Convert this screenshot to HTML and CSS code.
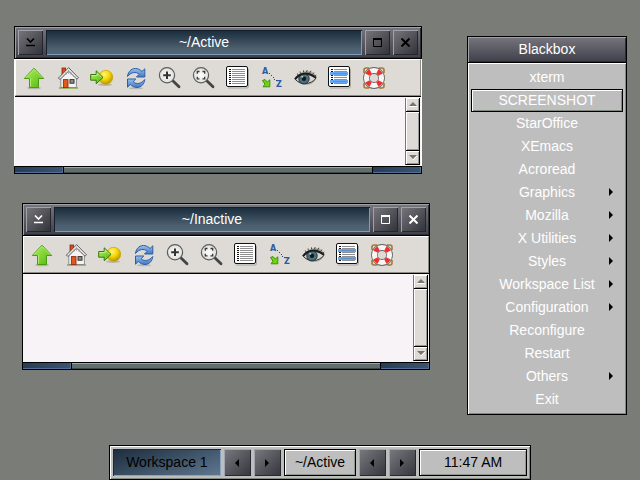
FILE: index.html
```html
<!DOCTYPE html>
<html lang="en">
<head>
<meta charset="utf-8">
<title>Blackbox</title>
<link rel="stylesheet" href="styles.css">
</head>
<body>
<svg class="sprite" aria-hidden="true">
  <defs>
    <linearGradient id="green" x1="0" y1="0" x2="1" y2="1"><stop offset="0" stop-color="#b5f060"/><stop offset="1" stop-color="#4fb80c"/></linearGradient>
    <linearGradient id="blue" x1="0" y1="0" x2="0" y2="1"><stop offset="0" stop-color="#9cc0ec"/><stop offset="1" stop-color="#3d78c4"/></linearGradient>
    <radialGradient id="gold" cx="0.4" cy="0.3" r="0.7"><stop offset="0" stop-color="#fff27a"/><stop offset="0.5" stop-color="#f8d808"/><stop offset="1" stop-color="#b89400"/></radialGradient>
    <radialGradient id="lens"><stop offset="0" stop-color="#ffffff"/><stop offset="1" stop-color="#dededb"/></radialGradient>
    <symbol id="up" viewBox="0 0 24 24">
      <ellipse cx="12" cy="22" rx="7" ry="1.3" fill="#b5b3aa"/>
      <path d="M12 2.2 21.7 12.5H16.5V21.5H7.5V12.5H2.3Z" fill="url(#green)" stroke="#4a9a14" stroke-linejoin="round"/>
      <path d="M3.8 11.8 12 3.4 20.2 11.8M8.5 12V20.5" fill="none" stroke="#baf27c" opacity=".8"/>
    </symbol>
    <symbol id="home" viewBox="0 0 24 24">
      <path d="M3 22H22" stroke="#8aa83a" stroke-width="1.4"/>
      <rect x="6" y="2" width="3.6" height="7" fill="#d9481e" stroke="#8b2b12" stroke-width=".8"/>
      <path d="M4.8 11 12.6 4 20.4 11V21.5H4.8Z" fill="#f4f4f2" stroke="#777" stroke-width=".8"/>
      <path d="M12.6 1.6 2.3 12.2 4 13.4 12.6 5.2 21 13.2 22.5 11.8Z" fill="#e6e6e6" stroke="#444" stroke-width=".8"/>
      <path d="M10 6V9M12.5 4V8M15 6V9M17.5 9V11M7.5 9V11" stroke="#999" stroke-width=".7"/>
      <rect x="7.4" y="13.6" width="4.6" height="8" fill="#e05a20" stroke="#982b0a" stroke-width=".9"/>
      <rect x="14" y="13.6" width="4" height="3.6" fill="#8d918d" stroke="#333"/>
    </symbol>
    <symbol id="jump" viewBox="0 0 24 24">
      <ellipse cx="15" cy="18.7" rx="7" ry="1.3" fill="#b7b4a6"/>
      <circle cx="15.7" cy="11.3" r="7" fill="url(#gold)" stroke="#c8a404" stroke-width=".7"/>
      <path d="M.7 8.5H6.2V4.8L13 11.4 6.2 17.8V14.2H.7Z" fill="url(#green)" stroke="#34780a"/>
      <path d="M1.5 9.5H7.2V7L11.5 11.2" fill="none" stroke="#d0f8a0" opacity=".8"/>
    </symbol>
    <symbol id="reload" viewBox="0 0 24 24">
      <ellipse cx="12" cy="22.2" rx="7" ry="1.1" fill="#b9b7b2"/>
      <path d="M3.5 10.5C4 5 8.5 1.6 13 2.7 15 3.1 16.8 4.2 18 5.5L20.8 2.8V11H12.5L15.2 8.3C11.8 5.2 7 6.2 3.5 10.5Z" fill="url(#blue)" stroke="#2d5fa5" stroke-linejoin="round"/>
      <path d="M20.8 13.5C20.3 19 15.8 22.4 11.3 21.3 9.3 20.9 7.5 19.8 6.3 18.5L3.5 21.2V13H11.8L9.1 15.7C12.5 18.8 17.3 17.8 20.8 13.5Z" fill="url(#blue)" stroke="#2d5fa5" stroke-linejoin="round"/>
    </symbol>
    <symbol id="zoomin" viewBox="0 0 24 24">
      <path d="M14.5 14.5 21 20.8" stroke="#444" stroke-width="2.8" stroke-linecap="round"/>
      <circle cx="9" cy="9.2" r="7.6" fill="url(#lens)" stroke="#5c5e5a" stroke-width="1.2"/>
      <path d="M9 5.5V13M5.2 9.2H12.8" stroke="#333" stroke-width="2"/>
    </symbol>
    <symbol id="zoomfit" viewBox="0 0 24 24">
      <path d="M14.5 14.5 21 20.8" stroke="#444" stroke-width="2.8" stroke-linecap="round"/>
      <circle cx="9" cy="9.2" r="7.6" fill="url(#lens)" stroke="#5c5e5a" stroke-width="1.2"/>
      <path d="M7.5 5.5H5.3V7.7M10.5 5.5H12.7V7.7M12.7 10.7V12.9H10.5M7.5 12.9H5.3V10.7" fill="none" stroke="#3a3a3a" stroke-width="1.3"/>
    </symbol>
    <symbol id="list" viewBox="0 0 24 24">
      <path d="M22.5 3V20.5Q22.5 22 21 22H2" fill="none" stroke="#aaa8a4"/>
      <rect x=".5" y=".5" width="21" height="20" rx="1.5" fill="#fff" stroke="#111"/>
      <path d="M3 3.5H5M3 5.5H5M3 7.5H5M3 9.5H5M3 11.5H5M3 13.5H5M3 15.5H5M3 17.5H5" stroke="#111"/>
      <path d="M6 3.5H19M6 5.5H19M6 7.5H19M6 9.5H19M6 11.5H19M6 13.5H19M6 15.5H19M6 17.5H19" stroke="#8f8f8f"/>
    </symbol>
    <symbol id="sort" viewBox="0 0 24 24">
      <text x="2" y="8" class="letter">A</text>
      <text x="16" y="21" class="letter">Z</text>
      <path d="M9 7.5h1M11 9.5h1M13 11.5h1M14 13.5h1M16 14.5h1" stroke="#204a87"/>
      <path d="M2.5 14.5 5 13.5 7.3 16 9.8 13.8V20.8H3L5 18.2Z" fill="#73d216" stroke="#3f8f08"/>
    </symbol>
    <symbol id="eye" viewBox="0 0 24 24">
      <path d="M1 13.5C4 6.5 11 3.5 17 5.5 20 6.5 22 9 22.7 12 21 17 15 20 9 18.7 5 18 3 15.5 1 13.5Z" fill="#8e8a84" opacity=".6"/>
      <path d="M1.5 13.6C6 8 14 6 21.8 12.5 17 18.5 7 19.5 1.5 13.6Z" fill="#d8d6d2" stroke="#333"/>
      <circle cx="10" cy="12.7" r="5.2" fill="#4b707c" stroke="#24343a"/>
      <circle cx="10" cy="12.7" r="2.2" fill="#101a1e"/>
      <circle cx="8.3" cy="10.7" r="1" fill="#b8d0d4"/>
      <path d="M1 13.3C4.5 7.5 13.5 4.5 22 11.8" fill="none" stroke="#1c1c1c" stroke-width="2"/>
      <path d="M4 9 3.4 7.5M6.5 7.5 6 5.5M9.5 6.3V4.4M12.5 6.2 13.2 4M15.5 7.2 17 4.8M18.3 8.7 20 6.6M20.5 10.5 22.3 9" fill="none" stroke="#3c3a38" stroke-width=".9"/>
    </symbol>
    <symbol id="select" viewBox="0 0 24 24">
      <use href="#list"/>
      <path d="M2 7.5H20M2 15.5H20" stroke="#67a7f4" stroke-width="3"/>
      <path d="M5 7.5H19M5 15.5H19" stroke="#5a90d4"/>
    </symbol>
    <symbol id="help" viewBox="0 0 24 24">
      <path d="M2 7V4Q2 2 4 2H7M17 2H20Q22 2 22 4V7M22 17V20Q22 22 20 22H17M7 22H4Q2 22 2 20V17" fill="none" stroke="#a47a34" stroke-width="1.6"/>
      <circle cx="12" cy="12" r="7.5" fill="none" stroke="#666" stroke-width="6.8"/>
      <circle cx="12" cy="12" r="7.5" fill="none" stroke="#f6f6f4" stroke-width="5.2"/>
      <circle cx="12" cy="12" r="7.3" fill="none" stroke="#f03030" stroke-width="5" pathLength="80" stroke-dasharray="8 12" stroke-dashoffset="-6"/>
    </symbol>
    <symbol id="iconify" viewBox="0 0 9 9"><path d="M1 .5 4.5 4 8 .5M0 7.5H9" fill="none" stroke="currentColor" stroke-width="1.6"/></symbol>
    <symbol id="maximize" viewBox="0 0 9 9"><path d="M.5 1H8.5V8.5H.5Z" fill="none" stroke="currentColor"/><path d="M0 1H9" stroke="currentColor" stroke-width="2"/></symbol>
    <symbol id="close" viewBox="0 0 9 9"><path d="M.5.5 8.5 8.5M8.5.5.5 8.5" stroke="currentColor" stroke-width="2"/></symbol>
    <symbol id="left" viewBox="0 0 4 8"><path d="M4 0V8L0 4Z" fill="currentColor"/></symbol>
    <symbol id="right" viewBox="0 0 4 8"><path d="M0 0V8L4 4Z" fill="currentColor"/></symbol>
    <symbol id="scrollup" viewBox="0 0 8 5"><path d="M0 4 4 0 8 4Z" fill="#77756f"/><path d="M0 4.5H8" stroke="#fff"/></symbol>
    <symbol id="scrolldown" viewBox="0 0 8 5"><path d="M4 5 8 1" stroke="#fff"/><path d="M0 0 4 4 8 0Z" fill="#77756f"/></symbol>
  </defs>
</svg>

<main class="desktop">
  <section class="window window-active" aria-label="~/Active">
    <header class="titlebar">
      <button class="frame-button" aria-label="Iconify"><svg><use href="#iconify"/></svg></button>
      <h1 class="title-label">~/Active</h1>
      <button class="frame-button" aria-label="Maximize"><svg><use href="#maximize"/></svg></button>
      <button class="frame-button" aria-label="Close"><svg><use href="#close"/></svg></button>
    </header>
    <div class="client">
      <nav class="tools" aria-label="Tools">
        <button aria-label="Up"><svg><use href="#up"/></svg></button>
        <button aria-label="Home"><svg><use href="#home"/></svg></button>
        <button aria-label="Go to"><svg><use href="#jump"/></svg></button>
        <button aria-label="Reload"><svg><use href="#reload"/></svg></button>
        <button aria-label="Zoom in"><svg><use href="#zoomin"/></svg></button>
        <button aria-label="Zoom to fit"><svg><use href="#zoomfit"/></svg></button>
        <button aria-label="List"><svg><use href="#list"/></svg></button>
        <button aria-label="Sort"><svg><use href="#sort"/></svg></button>
        <button aria-label="Show hidden"><svg><use href="#eye"/></svg></button>
        <button aria-label="Select"><svg><use href="#select"/></svg></button>
        <button aria-label="Help"><svg><use href="#help"/></svg></button>
      </nav>
      <div class="view">
        <div class="scrollbar">
          <button aria-label="Scroll up"><svg><use href="#scrollup"/></svg></button>
          <div class="thumb"></div>
          <button aria-label="Scroll down"><svg><use href="#scrolldown"/></svg></button>
        </div>
      </div>
    </div>
    <footer class="handle"><i class="grip"></i><i class="bar"></i><i class="grip"></i></footer>
  </section>

  <section class="window window-inactive" aria-label="~/Inactive">
    <header class="titlebar">
      <button class="frame-button" aria-label="Iconify"><svg><use href="#iconify"/></svg></button>
      <h1 class="title-label">~/Inactive</h1>
      <button class="frame-button" aria-label="Maximize"><svg><use href="#maximize"/></svg></button>
      <button class="frame-button" aria-label="Close"><svg><use href="#close"/></svg></button>
    </header>
    <div class="client">
      <nav class="tools" aria-label="Tools">
        <button aria-label="Up"><svg><use href="#up"/></svg></button>
        <button aria-label="Home"><svg><use href="#home"/></svg></button>
        <button aria-label="Go to"><svg><use href="#jump"/></svg></button>
        <button aria-label="Reload"><svg><use href="#reload"/></svg></button>
        <button aria-label="Zoom in"><svg><use href="#zoomin"/></svg></button>
        <button aria-label="Zoom to fit"><svg><use href="#zoomfit"/></svg></button>
        <button aria-label="List"><svg><use href="#list"/></svg></button>
        <button aria-label="Sort"><svg><use href="#sort"/></svg></button>
        <button aria-label="Show hidden"><svg><use href="#eye"/></svg></button>
        <button aria-label="Select"><svg><use href="#select"/></svg></button>
        <button aria-label="Help"><svg><use href="#help"/></svg></button>
      </nav>
      <div class="view">
        <div class="scrollbar">
          <button aria-label="Scroll up"><svg><use href="#scrollup"/></svg></button>
          <div class="thumb"></div>
          <button aria-label="Scroll down"><svg><use href="#scrolldown"/></svg></button>
        </div>
      </div>
    </div>
    <footer class="handle"><i class="grip"></i><i class="bar"></i><i class="grip"></i></footer>
  </section>

  <nav class="menu" aria-label="Blackbox">
    <h2 class="menu-title">Blackbox</h2>
    <div class="menu-items">
      <button class="item">xterm</button>
      <button class="item item-current">SCREENSHOT</button>
      <button class="item">StarOffice</button>
      <button class="item">XEmacs</button>
      <button class="item">Acroread</button>
      <button class="item">Graphics<svg><use href="#right"/></svg></button>
      <button class="item">Mozilla<svg><use href="#right"/></svg></button>
      <button class="item">X Utilities<svg><use href="#right"/></svg></button>
      <button class="item">Styles<svg><use href="#right"/></svg></button>
      <button class="item">Workspace List<svg><use href="#right"/></svg></button>
      <button class="item">Configuration<svg><use href="#right"/></svg></button>
      <button class="item">Reconfigure</button>
      <button class="item">Restart</button>
      <button class="item">Others<svg><use href="#right"/></svg></button>
      <button class="item">Exit</button>
    </div>
  </nav>

  <footer class="toolbar">
    <div class="workspace">Workspace 1</div>
    <button class="step" aria-label="Previous workspace"><svg><use href="#left"/></svg></button>
    <button class="step" aria-label="Next workspace"><svg><use href="#right"/></svg></button>
    <div class="task">~/Active</div>
    <button class="step" aria-label="Previous window"><svg><use href="#left"/></svg></button>
    <button class="step" aria-label="Next window"><svg><use href="#right"/></svg></button>
    <div class="clock">11:47 AM</div>
  </footer>
</main>
</body>
</html>
```
FILE: styles.css
```css
* { box-sizing: border-box; }

body {
  margin: 0;
  font: 14px/20px "Liberation Sans", Arial, sans-serif;
}

button {
  margin: 0;
  padding: 0;
  border: 0;
  background: none;
  color: inherit;
  font: inherit;
}

svg { display: block; }
h1, h2 { margin: 0; font: inherit; }

.sprite { position: absolute; width: 0; height: 0; }
.letter { font: bold 8px "DejaVu Sans", sans-serif; fill: #2a5aa4; }

.desktop {
  position: relative;
  display: flex;
  flex-direction: column;
  align-items: center;
  justify-content: flex-end;
  min-height: 100vh;
  background: #7a7c77;
}

/* Windows */
.window { position: absolute; }
.window-active { top: 26px; left: 14px; right: 218px; color: #000; }
.window-inactive { top: 203px; left: 22px; right: 210px; color: #fff; }

.titlebar {
  display: flex;
  gap: 3px;
  padding: 3px;
  border: 1px solid #000;
  background: linear-gradient(#77757e, #3f3f49);
  box-shadow: inset 1px 1px #a3a1a8, inset -1px -1px #2d2d35;
}

.frame-button {
  display: grid;
  place-items: center;
  width: 25px;
  height: 25px;
  background: linear-gradient(135deg, #77777c, #303038);
  box-shadow: inset 1px 1px #a0a0a8, inset -1px -1px #25252b;
}

.frame-button svg { width: 9px; height: 9px; }

.title-label {
  flex: 1;
  line-height: 25px;
  text-align: center;
  color: #fff;
  background: linear-gradient(#192b3b, #4c6070 75%, #526778);
  box-shadow: inset 1px 1px #14202c, inset -1px -1px #7d9cbc;
}

.client {
  border: solid #fff;
  border-width: 0 1px;
  background: #f7f3f7;
}

.window-inactive .client { border-color: #000; }

.tools {
  display: flex;
  padding: 6px 1px 5px;
  border: 1px solid;
  border-color: #fff #8d8b86 #8d8b86 #fff;
  background: #dedbd6;
}

.tools button { width: 34px; padding: 0 5px; }
.tools svg { width: 24px; height: 24px; }

.view {
  display: flex;
  justify-content: flex-end;
  border-top: 1px solid #000;
  padding: 1px 1px 1px 0;
}

.window-active .view { height: 70px; }
.window-inactive .view { height: 89px; }

.scrollbar {
  display: flex;
  flex-direction: column;
  gap: 1px;
  width: 15px;
  border: solid;
  border-width: 0 1px 1px;
  border-color: #77756f #000 #000 #77756f;
  background: #000;
}

.scrollbar button,
.thumb {
  display: grid;
  place-items: center;
  height: 13px;
  background: #dedbd6;
  box-shadow: inset 1px 1px #fff, inset -1px -1px #9a9892;
}

.scrollbar .thumb { flex: 1; }
.scrollbar svg { width: 8px; height: 5px; }

.handle {
  display: flex;
  gap: 1px;
  padding: 1px;
  background: #000;
}

.grip {
  width: 48px;
  height: 6px;
  background: linear-gradient(90deg, #263d54, #3c5470);
  box-shadow: inset -1px -1px #526f98;
}

.bar {
  flex: 1;
  background: #626d6e;
  box-shadow: inset 0 1px #9aa5a4, inset 0 -1px #3e4848;
}

/* Root menu */
.menu {
  position: absolute;
  top: 36px;
  right: 13px;
  width: 160px;
  border: 1px solid #000;
  color: #fff;
  text-align: center;
}

.menu-title {
  border-bottom: 1px solid #000;
  line-height: 25px;
  background: linear-gradient(#77757e, #3f3f49);
  box-shadow: inset 1px 1px #a3a1a8, inset -1px -1px #2d2d35;
}

.menu-items {
  padding: 3px;
  background: #bebebe;
  box-shadow: inset 1px 1px #fff, inset -1px -1px #808880;
}

.item {
  position: relative;
  display: block;
  width: 100%;
  height: 23px;
  border: 1px solid transparent;
  line-height: 21px;
}

.item-current {
  border-color: #000;
  box-shadow: inset 1px 1px #fff, inset -1px -1px #808880;
}

.item svg {
  position: absolute;
  top: 6px;
  right: 9px;
  width: 4px;
  height: 8px;
  color: #000;
}

/* Bottom toolbar */
.toolbar {
  display: grid;
  grid-template-columns: 1fr 27px 27px 72px 27px 27px 1fr;
  gap: 3px;
  width: 66%;
  padding: 3px;
  border: 1px solid #000;
  background: #bebebe;
  box-shadow: inset 1px 1px #fff, inset -1px -1px #808880;
  color: #000;
  line-height: 27px;
  text-align: center;
}

.workspace {
  background: linear-gradient(160deg, #1b2c3c, #607890);
  box-shadow: inset 1px 1px #1c2936, inset -1px -1px #86a4c4;
}

.step {
  display: grid;
  place-items: center;
  background: linear-gradient(135deg, #7a7a80, #34343c);
  box-shadow: inset 1px 1px #a4a4b0, inset -1px -1px #28282e;
}

.step svg { width: 4px; height: 8px; }

.task,
.clock {
  border: 1px solid #000;
  box-shadow: inset 1px 1px #fff, inset -1px -1px #909890;
  line-height: 25px;
}
```
